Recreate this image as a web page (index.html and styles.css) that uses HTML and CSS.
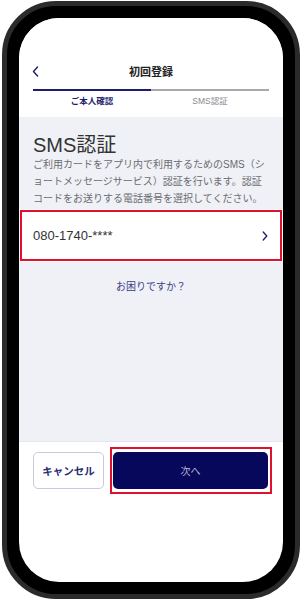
FILE: index.html
```html
<!DOCTYPE html>
<html lang="ja">
<head>
<meta charset="utf-8">
<title>初回登録</title>
<link rel="stylesheet" href="styles.css">
</head>
<body>
<div class="phone">
  <div class="screen">
    <header class="header">
      <div class="topspace"></div>
      <div class="nav">
        <svg class="back" width="7" height="11" viewBox="0 0 7 11"><polyline points="5.5,1 1.5,5.5 5.5,10" fill="none" stroke="#1d1d6b" stroke-width="1.4" stroke-linecap="round" stroke-linejoin="round"/></svg>
        <div class="title">初回登録</div>
      </div>
      <div class="tabs">
        <div class="tab active"><div class="bar"></div><div class="label">ご本人確認</div></div>
        <div class="tab"><div class="bar"></div><div class="label">SMS認証</div></div>
      </div>
    </header>
    <main class="content">
      <h1 class="heading">SMS認証</h1>
      <p class="desc">ご利用カードをアプリ内で利用するためのSMS（ショートメッセージサービス）認証を行います。認証コードをお送りする電話番号を選択してください。</p>
      <div class="row">
        <span class="phone-num">080-1740-****</span>
        <svg class="chev" width="6" height="10" viewBox="0 0 6 10"><polyline points="1.2,1 4.8,5 1.2,9" fill="none" stroke="#1d1d6b" stroke-width="1.3" stroke-linecap="round" stroke-linejoin="round"/></svg>
      </div>
      <div class="help">お困りですか？</div>
    </main>
    <footer class="footer">
      <button class="btn cancel">キャンセル</button>
      <button class="btn next">次へ</button>
    </footer>
  </div>
</div>
</body>
</html>
```
FILE: styles.css
```css
* { box-sizing: border-box; }
html, body { margin: 0; padding: 0; background: #fff; }
body {
  width: 301px;
  height: 601px;
  font-family: "Liberation Sans", "Noto Sans CJK JP", sans-serif;
  overflow: hidden;
}
.phone {
  margin: 1px 0 0 2px;
  width: 298px;
  height: 598px;
  border: 5px solid #2b2b2b;
  border-radius: 54px;
  background: #000;
  padding: 12px;
}
.screen {
  width: 100%;
  height: 100%;
  border-radius: 40px;
  overflow: hidden;
  background: #fff;
  display: flex;
  flex-direction: column;
}
.header { background: #fff; }
.topspace { height: 40px; }
.nav {
  height: 26px;
  position: relative;
  display: flex;
  align-items: center;
  justify-content: center;
}
.back { position: absolute; left: 13px; top: 8px; }
.title {
  font-family: "Noto Sans CJK JP", sans-serif;
  font-size: 11px;
  font-weight: 700;
  color: #222;
  line-height: 14px;
}
.tabs {
  display: flex;
  padding: 5px 14px 10px;
}
.tab { flex: 1; }
.bar { height: 2px; background: #a9a9ad; }
.tab.active .bar { background: #1d1d6b; }
.label {
  margin-top: 4px;
  text-align: center;
  font-size: 8.5px;
  line-height: 12px;
  color: #8a8a8f;
}
.tab.active .label { color: #1d1d6b; font-weight: 700; }
.content {
  flex: none;
  height: 325px;
  background: #eff1f6;
  padding-top: 16px;
  border-bottom: 1px solid #e4e6ec;
}
.heading {
  margin: 0;
  padding: 0 14px;
  font-size: 20px;
  font-weight: 400;
  line-height: 24px;
  color: #333;
}
.desc {
  margin: -1px 0 0;
  padding: 0 14px;
  font-size: 10px;
  line-height: 17px;
  color: #6b6b70;
}
.row {
  margin-top: 2px;
  height: 53px;
  background: #fff;
  display: flex;
  align-items: center;
  justify-content: space-between;
  padding: 0 14px;
  outline: 2px solid #e0112d;
  outline-offset: -3px;
}
.phone-num { font-size: 13px; color: #333; }
.chev { margin-right: 1px; }
.help {
  margin-top: 19px;
  text-align: center;
  font-size: 10px;
  line-height: 12px;
  color: #3b3d86;
}
.footer {
  display: flex;
  gap: 9px;
  padding: 10px 15px 0 14px;
}
.btn {
  height: 37px;
  border-radius: 5px;
  font-family: "Noto Sans CJK JP", sans-serif;
  font-size: 10.5px;
  padding: 0;
  cursor: pointer;
}
.cancel {
  width: 71px;
  background: #fff;
  border: 1px solid #c9c9dc;
  color: #2a2c70;
  font-weight: 700;
}
.next {
  flex: 1;
  position: relative;
  background: #07075c;
  border: none;
  color: #b8b8d2;
  font-size: 10px;
}
.next::after {
  content: "";
  position: absolute;
  top: -5px;
  bottom: -5px;
  left: -3px;
  right: -4px;
  border: 2px solid #e0112d;
}
```
